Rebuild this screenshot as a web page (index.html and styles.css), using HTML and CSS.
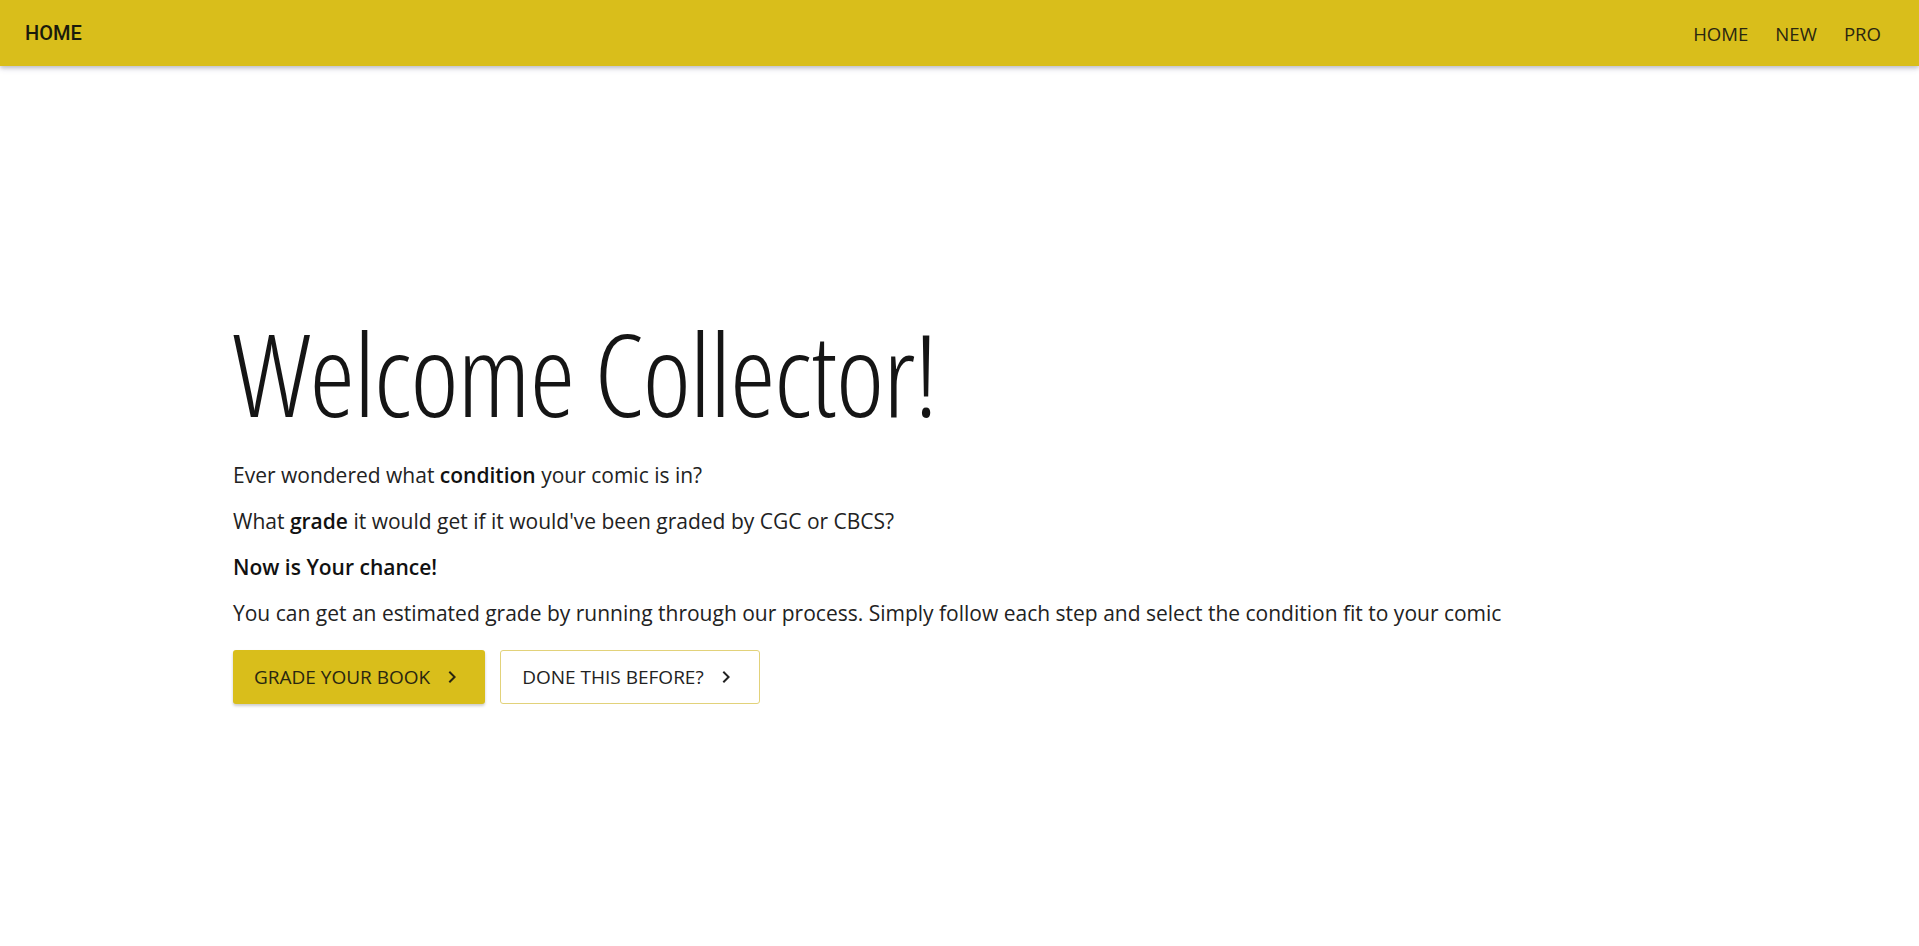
FILE: index.html
```html
<!DOCTYPE html>
<html lang="en">
<head>
<meta charset="utf-8">
<title>Home</title>
<link rel="stylesheet" href="styles.css">
</head>
<body>
<header class="navbar">
  <a class="brand" href="#">HOME</a>
  <nav class="nav-links">
    <a href="#">HOME</a>
    <a href="#">NEW</a>
    <a href="#">PRO</a>
  </nav>
</header>
<main class="hero">
  <div class="hero-inner">
    <h1 class="title">Welcome Collector!</h1>
    <p class="text">Ever wondered what <strong>condition</strong> your comic is in?</p>
    <p class="text">What <strong>grade</strong> it would get if it would've been graded by CGC or CBCS?</p>
    <p class="text"><strong>Now is Your chance!</strong></p>
    <p class="text">You can get an estimated grade by running through our process. Simply follow each step and select the condition fit to your comic</p>
    <div class="actions">
      <a class="btn btn-primary" href="#">GRADE YOUR BOOK
        <svg class="chev" viewBox="0 0 24 24" width="24" height="24"><path d="M8.59 16.59 13.17 12 8.59 7.41 10 6l6 6-6 6z"/></svg>
      </a>
      <a class="btn btn-outline" href="#">DONE THIS BEFORE?
        <svg class="chev" viewBox="0 0 24 24" width="24" height="24"><path d="M8.59 16.59 13.17 12 8.59 7.41 10 6l6 6-6 6z"/></svg>
      </a>
    </div>
  </div>
</main>
</body>
</html>
```
FILE: styles.css
```css
* { box-sizing: border-box; }
html, body { margin: 0; padding: 0; }
body {
  background: #fff;
  color: #222;
  font-family: "Open Sans", "Liberation Sans", sans-serif;
}
a { text-decoration: none; color: inherit; }

.navbar {
  height: 66px;
  background: #d9be1b;
  display: flex;
  align-items: center;
  justify-content: space-between;
  padding: 0 38px 0 25px;
  box-shadow: 0 2px 4px rgba(0,0,0,0.18), 0 3px 6px rgba(60,60,140,0.12);
  position: relative;
  z-index: 2;
}
.brand {
  font-family: Roboto, "Liberation Sans", sans-serif;
  font-weight: 500;
  font-size: 20px;
  color: #1b1a0c;
}
.nav-links {
  display: flex;
  gap: 27px;
}
.nav-links a {
  font-size: 18.6px;
  color: #2a2710;
}

.hero {
  min-height: calc(100vh - 66px);
  display: flex;
  align-items: center;
  padding: 0 233px;
}
.title {
  font-family: "Open Sans", sans-serif;
  font-stretch: 75%;
  font-weight: 300;
  font-size: 115px;
  letter-spacing: -1px;
  line-height: 130px;
  margin: 0 0 22px;
  color: #151515;
}
.text {
  font-size: 21px;
  line-height: 30px;
  margin: 0 0 16px;
  color: #222;
}
.text strong { font-weight: 600; color: #111; }

.actions {
  display: flex;
  gap: 15px;
  margin-top: 22px;
}
.btn {
  height: 54px;
  display: inline-flex;
  align-items: center;
  padding: 0 21px;
  font-size: 19px;
  border-radius: 3px;
  color: #2a2710;
}
.btn-primary {
  background: #d9be1b;
  box-shadow: 0 2px 3px rgba(0,0,0,0.2);
}
.btn-outline {
  background: #fff;
  border: 1px solid #e2d27a;
  color: #222;
}
.chev {
  margin-left: 10px;
  width: 24px;
  height: 24px;
  fill: currentColor;
}
```
